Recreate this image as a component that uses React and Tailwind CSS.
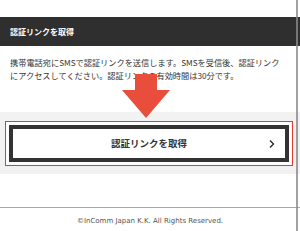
import React from 'react';

const jp = { fontFamily: '"Noto Sans CJK JP", "Noto Sans", sans-serif' };

export default function App() {
    return (
        <div className="relative w-[300px] h-[231px] overflow-hidden bg-white" style={jp}>
            {/* spacer above header */}
            <div className="h-[17px]" />

            {/* Section header */}
            <div className="h-[29px] bg-[#2f2f2f] flex items-center pl-[10px]">
                <span className="text-[8px] font-bold text-white leading-none">認証リンクを取得</span>
            </div>

            {/* Description */}
            <div className="h-[66px] pt-[10px] pl-[10px] pr-[8px]">
                <p className="text-[8.2px] leading-[13px] text-[#333] whitespace-nowrap">
                    携帯電話宛にSMSで認証リンクを送信します。SMSを受信後、認証リンク
                    <br />
                    にアクセスしてください。認証リンクの有効時間は30分です。
                </p>
            </div>

            {/* Button area */}
            <div className="h-[62px] bg-[#f2f2f2] pt-[9px] pl-[5px] pr-[7px]">
                <div className="border border-[#e8392f] p-[3px] bg-white">
                    <button className="w-full h-[37px] border-[4px] border-[#333] bg-white flex items-center justify-center relative">
                        <span className="text-[9.5px] font-bold text-[#333] leading-none">認証リンクを取得</span>
                        <svg className="absolute right-[10px] top-1/2 -translate-y-1/2" width="6" height="9" viewBox="0 0 6 9">
                            <path d="M1 1 L4.5 4.5 L1 8" fill="none" stroke="#222" strokeWidth="1.3" />
                        </svg>
                    </button>
                </div>
            </div>

            <div className="h-[33px]" />

            {/* Footer */}
            <div className="border-t-[1.5px] border-[#a8a8a8] pt-[10px] text-center">
                <p className="text-[7px] text-[#555] leading-none" style={{ fontFamily: '"DejaVu Sans", Verdana, sans-serif' }}>
                    ©InComm Japan K.K. All Rights Reserved.
                </p>
            </div>

            {/* Red arrow overlay */}
            <svg className="absolute left-[122px] top-[74px]" width="50" height="44" viewBox="0 0 50 44">
                <path d="M13 0 H35 V16 H48 L24 44 L0 16 H13 Z" fill="#e94e3c" />
            </svg>

            {/* right edge border line */}
            <div className="absolute top-0 bottom-0 left-[296px] w-[2px] bg-[#8a8a8a] opacity-80" />
        </div>
    );
}
